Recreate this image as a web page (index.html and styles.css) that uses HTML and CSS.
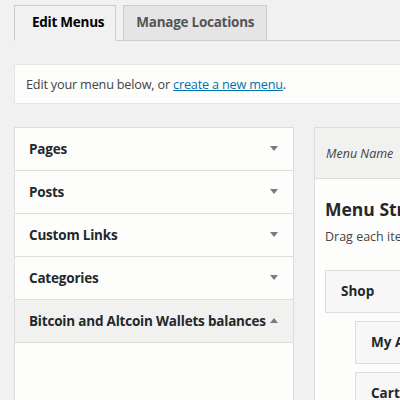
FILE: index.html
```html
<!DOCTYPE html>
<html>
<head>
<meta charset="utf-8">
<link rel="stylesheet" href="styles.css">
</head>
<body>
<div class="wrap">
  <nav class="tabs">
    <a class="tab tab-active">Edit Menus</a>
    <a class="tab">Manage Locations</a>
  </nav>
  <div class="notice">Edit your menu below, or <a class="link">create a new menu</a>.</div>
  <div class="columns">
    <div class="accordion">
      <div class="acc-item"><span class="acc-title">Pages</span><span class="arrow down"></span></div>
      <div class="acc-item"><span class="acc-title">Posts</span><span class="arrow down"></span></div>
      <div class="acc-item"><span class="acc-title">Custom Links</span><span class="arrow down"></span></div>
      <div class="acc-item"><span class="acc-title">Categories</span><span class="arrow down"></span></div>
      <div class="acc-item acc-open"><span class="acc-title">Bitcoin and Altcoin Wallets balances</span><span class="arrow up"></span></div>
      <div class="acc-body"></div>
    </div>
    <div class="menu-panel">
      <div class="menu-header"><span class="menu-name">Menu Name</span></div>
      <div class="menu-body">
        <h3 class="menu-title">Menu Structure</h3>
        <p class="menu-desc">Drag each item into the order you prefer.</p>
        <div class="menu-item">Shop</div>
        <div class="menu-item sub">My Account</div>
        <div class="menu-item sub">Cart</div>
      </div>
    </div>
  </div>
</div>
</body>
</html>
```
FILE: styles.css
```css
html, body {
  margin: 0;
  padding: 0;
  background: #f1f1f1;
  overflow: hidden;
  width: 400px;
  height: 400px;
}
body {
  font-family: "Open Sans", "DejaVu Sans", sans-serif;
  color: #444;
}
.wrap {
  padding: 5px 0 0 14px;
  width: 600px;
}
.tabs {
  display: flex;
  gap: 7px;
  border-bottom: 1px solid #ccc;
  height: 35px;
}
.tab {
  box-sizing: border-box;
  height: 36px;
  border: 1px solid #ccc;
  background: #e5e5e5;
  color: #555;
  font-weight: 700;
  font-size: 13.5px;
  line-height: 33px;
  padding: 0 12px;
  letter-spacing: -0.25px;
  white-space: nowrap;
}
.tab-active {
  background: #f1f1f1;
  border-bottom-color: #f1f1f1;
  color: #000;
  padding: 0 11px 0 17px;
}
.notice {
  margin-top: 23px;
  box-sizing: border-box;
  height: 40px;
  width: 400px;
  background: #fdfdfc;
  border: 1px solid #e5e5e5;
  font-size: 12.7px;
  line-height: 38px;
  padding-left: 11px;
  letter-spacing: -0.2px;
}
.link {
  color: #0073aa;
  text-decoration: underline;
}
.columns {
  display: flex;
  gap: 20px;
  margin-top: 23px;
  align-items: flex-start;
}
.accordion {
  width: 280px;
  box-sizing: border-box;
  border: 1px solid #ddd;
  background: #fdfdfc;
  flex: none;
}
.acc-item {
  height: 42px;
  border-bottom: 1px solid #ddd;
  display: flex;
  align-items: center;
  justify-content: space-between;
  padding: 0 15px 0 14px;
  background: #fdfdfc;
}
.acc-open {
  background: #f1f1f0;
}
.acc-title {
  font-weight: 700;
  font-size: 13.5px;
  color: #23282d;
  letter-spacing: -0.2px;
  white-space: nowrap;
}
.arrow {
  width: 0;
  height: 0;
  border-left: 4px solid transparent;
  border-right: 4px solid transparent;
  margin-bottom: 1px;
}
.arrow.down {
  border-top: 5px solid #787c82;
}
.arrow.up {
  border-bottom: 5px solid #787c82;
}
.acc-body {
  height: 70px;
}
.menu-panel {
  width: 400px;
  flex: none;
  border: 1px solid #ddd;
  background: #fdfdfc;
}
.menu-header {
  height: 50px;
  background: #f1f1f0;
  border-bottom: 1px solid #ddd;
  display: flex;
  align-items: center;
  padding-left: 11px;
}
.menu-name {
  font-style: italic;
  font-size: 12.5px;
  color: #444;
}
.menu-body {
  padding: 18px 10px 0 10px;
}
.menu-title {
  margin: 0;
  font-size: 17.5px;
  font-weight: 700;
  color: #23282d;
  line-height: 24px;
}
.menu-desc {
  margin: 7px 0 0;
  font-size: 12.5px;
  line-height: 18px;
}
.menu-item {
  box-sizing: border-box;
  height: 43px;
  width: 300px;
  margin-top: 24px;
  border: 1px solid #ddd;
  background: #f6f7f6;
  font-weight: 700;
  font-size: 13.5px;
  color: #23282d;
  line-height: 41px;
  padding-left: 15px;
}
.menu-item.sub {
  margin-left: 30px;
  margin-top: 8px;
}
```
